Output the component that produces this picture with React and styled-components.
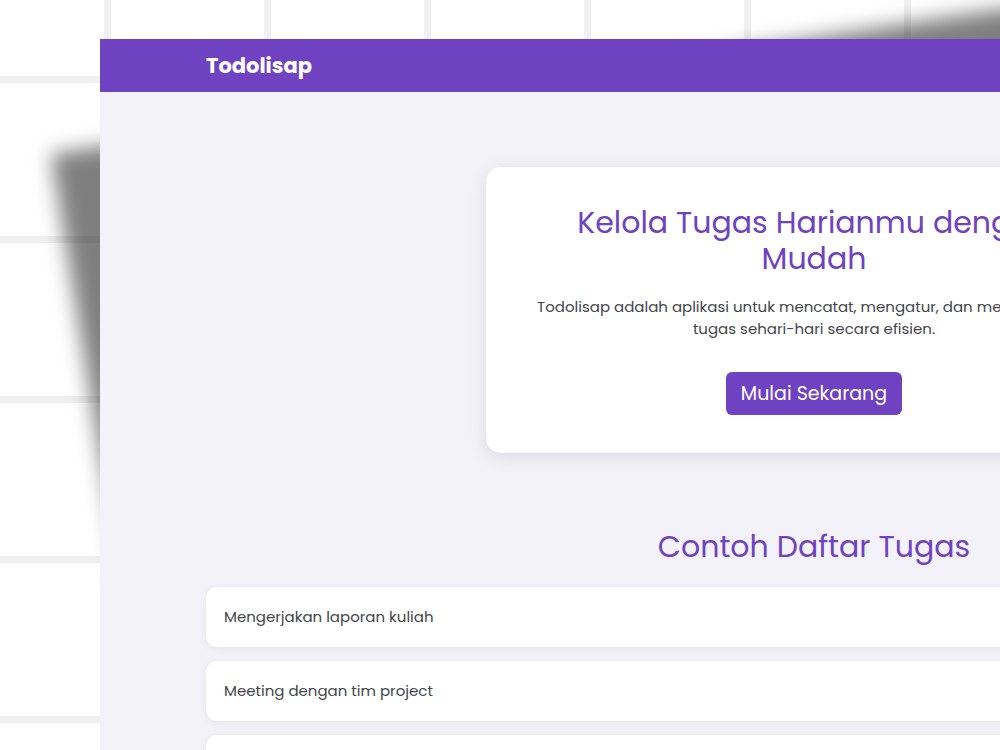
import React from "react";
import styled, { createGlobalStyle } from "styled-components";

const purple = "#6f42c1";

const GlobalStyle = createGlobalStyle`
  *, *::before, *::after { box-sizing: border-box; }
  body {
    margin: 0;
    background: #fff;
    color: #424549;
    font-family: Poppins, Inter, "Open Sans", sans-serif;
    font-size: 15px;
    line-height: 22px;
  }
`;

const Desk = styled.div`
  position: relative;
  height: 100vh;
  padding: 39px 0 0 100px;
  overflow: hidden;
  background:
    linear-gradient(#f0f0f0 7px, transparent 7px) 0 76px / 160px 160px,
    linear-gradient(90deg, #f0f0f0 7px, transparent 7px) 104px 0 / 160px 160px,
    #fff;
`;

const Shadow = styled.svg`
  position: absolute;
  top: 0;
  left: 0;
  overflow: visible;
`;

const Window = styled.div`
  position: relative;
  width: calc(100% + 528px);
  min-height: 100%;
  background: #f3f2f9;
`;

const Navbar = styled.header`
  display: flex;
  align-items: center;
  height: 53px;
  padding: 0 106px;
  background: ${purple};
`;

const Brand = styled.a`
  color: #fff;
  font-size: 21px;
  font-weight: 700;
  line-height: 30px;
  text-decoration: none;
`;

const Main = styled.main`
  padding: 75px 106px 0;
`;

const Hero = styled.section`
  max-width: 657px;
  margin: 0 auto;
  padding: 38px 40px;
  border-radius: 15px;
  background: #fff;
  box-shadow: 0 4px 18px rgba(0, 0, 0, 0.1);
  text-align: center;
`;

const Title = styled.h1`
  margin: 0;
  color: ${purple};
  font-size: 30px;
  font-weight: 400;
  line-height: 36px;
`;

const Lead = styled.p`
  margin: 19px 0 32px;
`;

const StartButton = styled.button`
  display: block;
  height: 43px;
  margin: 0 auto;
  padding: 0 15px;
  border: 0;
  border-radius: 6px;
  background: ${purple};
  color: #fff;
  font: inherit;
  font-size: 19px;
`;

const Tasks = styled.section`
  margin-top: 76px;
`;

const SectionTitle = styled(Title).attrs({ as: "h2" })`
  text-align: center;
`;

const TaskList = styled.ul`
  display: flex;
  flex-direction: column;
  gap: 14px;
  margin: 22px 0 0;
  padding: 0;
  list-style: none;
`;

const Task = styled.li`
  display: flex;
  align-items: center;
  height: 60px;
  padding: 0 18px;
  border-radius: 11px;
  background: #fff;
  box-shadow: 0 2px 8px rgba(0, 0, 0, 0.06);
`;

const tasks = ["Mengerjakan laporan kuliah", "Meeting dengan tim project", ""];

export default function App() {
  return (
    <>
      <GlobalStyle />
      <Desk>
        <Shadow width="1000" height="750" aria-hidden="true">
          <defs>
            <filter id="soft" x="-10%" y="-10%" width="120%" height="120%">
              <feGaussianBlur stdDeviation="10" />
            </filter>
          </defs>
          <polygon
            points="51,154 1100,-6 1100,700 141,700"
            fill="#000"
            fillOpacity="0.5"
            filter="url(#soft)"
          />
        </Shadow>
        <Window>
          <Navbar>
            <Brand href="#">Todolisap</Brand>
          </Navbar>
          <Main>
            <Hero>
              <Title>
                Kelola Tugas Harianmu dengan
                <br />
                Mudah
              </Title>
              <Lead>
                Todolisap adalah aplikasi untuk mencatat, mengatur, dan menyelesaikan
                <br />
                tugas sehari-hari secara efisien.
              </Lead>
              <StartButton type="button">Mulai Sekarang</StartButton>
            </Hero>
            <Tasks>
              <SectionTitle>Contoh Daftar Tugas</SectionTitle>
              <TaskList>
                {tasks.map((task, i) => (
                  <Task key={i}>{task}</Task>
                ))}
              </TaskList>
            </Tasks>
          </Main>
        </Window>
      </Desk>
    </>
  );
}
